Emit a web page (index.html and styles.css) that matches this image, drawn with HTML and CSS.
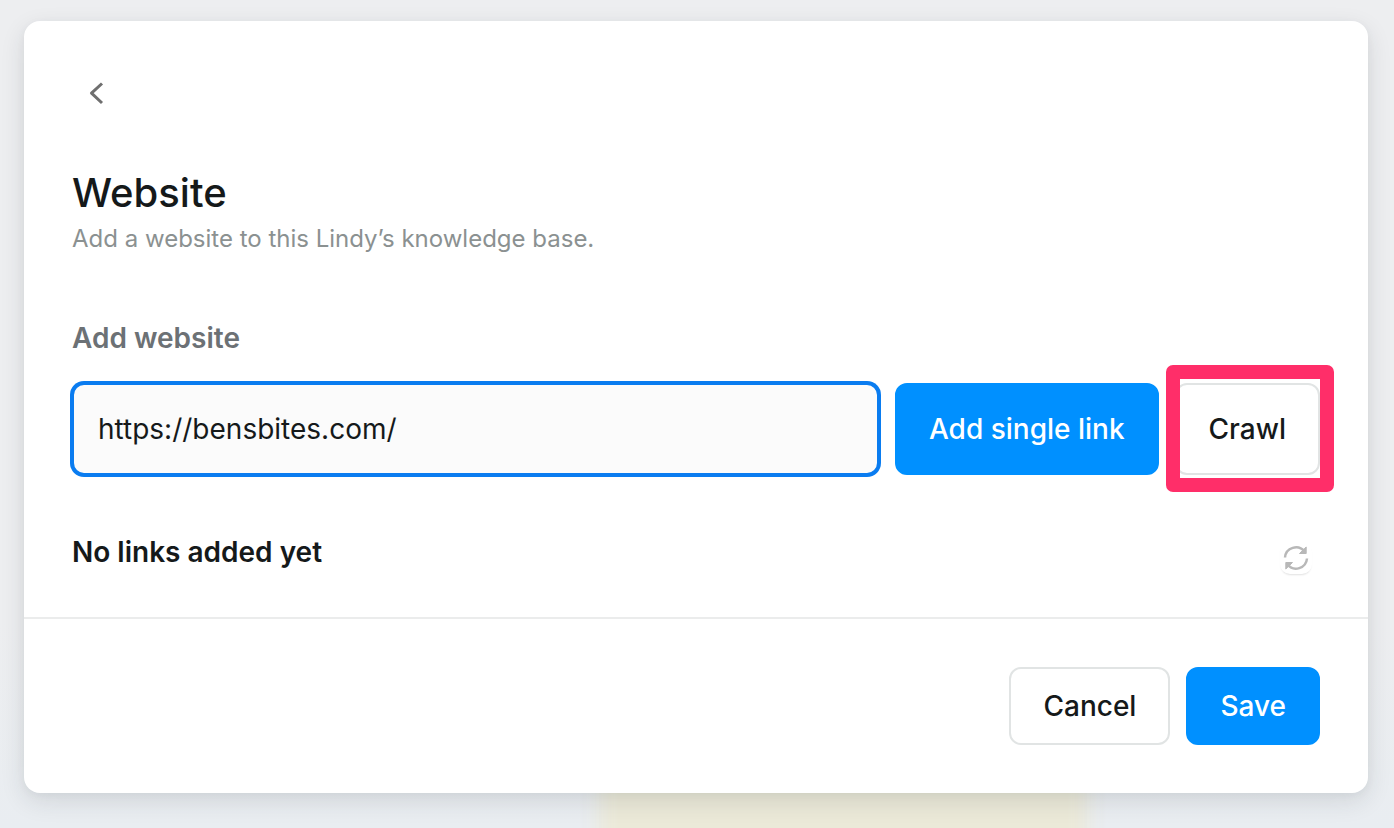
FILE: index.html
```
<!DOCTYPE html>
<html lang="en">
<head>
    <meta charset="UTF-8">
    <meta name="viewport" content="width=device-width, initial-scale=1.0">
    <title>Website</title>
    <link rel="stylesheet" href="styles.css">
</head>
<body>
    <div class="backdrop-note"></div>
    <main class="modal">
        <div class="modal-body">
            <button type="button" class="back-btn" aria-label="Back">
                <svg width="48" height="48" viewBox="0 0 48 48" fill="none" stroke="#6f6f6f" stroke-width="3" stroke-linejoin="round">
                    <path d="M30 14.500 19.500 24.200 30 34"/>
                </svg>
            </button>

            <h1>Website</h1>
            <p class="subtitle">Add a website to this Lindy’s knowledge base.</p>

            <form id="add-form">
                <label for="url">Add website</label>
                <div class="url-row">
                    <input type="text" id="url" value="https://bensbites.com/">
                    <button type="button" class="btn btn-primary">Add single link</button>
                    <div class="highlight">
                        <button type="button" class="btn">Crawl</button>
                    </div>
                </div>
            </form>

            <div class="links-row">
                <h2>No links added yet</h2>
                <button type="button" class="refresh-btn" aria-label="Refresh">
                    <svg width="28" height="28" viewBox="0 0 28 28" fill="none" stroke="#b8b8b8" stroke-width="2.500">
                        <path d="M3 13.500A11 11 0 0 1 22.500 7.500M25 14.500A11 11 0 0 1 5.500 20.500"/>
                        <path d="M24.200 3V9.500H17.500ZM3.800 25V18.500H10.500Z" fill="#b8b8b8" stroke-width="1" stroke-linejoin="round"/>
                    </svg>
                </button>
            </div>
        </div>

        <div class="modal-footer">
            <button type="button" class="btn">Cancel</button>
            <button type="submit" form="add-form" class="btn btn-primary">Save</button>
        </div>
    </main>
</body>
</html>
```
FILE: styles.css
```
* {
    box-sizing: border-box;
}
body {
    margin: 0;
    padding: 21px 26px 35px 24px;
    min-height: 100vh;
    position: relative;
    overflow: hidden;
    font-family: Inter, "Liberation Sans", sans-serif;
    color: #15191a;
    background: linear-gradient(#edeef0 75%, #e9edf1);
}
h1, h2, p {
    margin: 0;
}
/* blurred note on the page behind the modal */
.backdrop-note {
    position: absolute;
    left: 43%;
    right: 22%;
    bottom: -30px;
    height: 90px;
    background: #ebe9d8;
    filter: blur(10px);
}
.modal {
    position: relative;
    background: white;
    border-radius: 16px;
    box-shadow: 0 8px 24px rgba(30, 45, 50, 0.12), 0 2px 8px rgba(30, 45, 50, 0.04);
}
.modal-body {
    padding: 48px 48px 43px;
    border-bottom: 2px solid #ebecec;
}
button {
    font-family: inherit;
    cursor: pointer;
}
.back-btn {
    display: block;
    width: 48px;
    height: 48px;
    padding: 0;
    border: none;
    background: none;
}
h1 {
    margin-top: 52px;
    font-size: 40px;
    line-height: 48px;
    font-weight: 500;
}
.subtitle {
    margin-top: 6px;
    font-size: 24px;
    line-height: 32px;
    color: #8b9191;
}
label {
    display: block;
    margin-top: 63px;
    font-size: 28px;
    line-height: 40px;
    font-weight: 600;
    color: #6c7175;
}
.url-row {
    display: flex;
    gap: 16px;
    margin-top: 25px;
}
#url {
    flex: 1;
    min-width: 0;
    height: 92px;
    padding: 0 24px;
    border: 2px solid #0a7cf0;
    border-radius: 12px;
    box-shadow: 0 0 0 2px #0a7cf0;
    outline: none;
    background: #fbfbfb;
    font-family: inherit;
    font-size: 28px;
    color: #15191a;
}
.btn {
    height: 78px;
    padding: 0 32px;
    border: 2px solid #e1e4e4;
    border-radius: 12px;
    background: white;
    color: #15191a;
    font-size: 28px;
    font-weight: 500;
    white-space: nowrap;
}
.btn-primary {
    border-color: #0090ff;
    background: #0090ff;
    color: white;
}
.url-row .btn {
    height: 92px;
}
.highlight {
    position: relative;
}
.highlight::after {
    content: "";
    position: absolute;
    inset: -18px -14px -17px -9px;
    border: 14px solid #ff2e69;
    border-radius: 7px;
    pointer-events: none;
}
.links-row {
    display: flex;
    justify-content: space-between;
    padding-right: 8px;
    margin-top: 57px;
}
h2 {
    font-size: 28px;
    line-height: 40px;
    font-weight: 600;
}
.refresh-btn {
    display: flex;
    align-items: center;
    justify-content: center;
    width: 32px;
    height: 32px;
    margin-top: 10px;
    padding: 0;
    border: none;
    border-radius: 10px;
    background: white;
    box-shadow: 0 2px 2px -1px rgba(0, 0, 0, 0.12);
}
.modal-footer {
    display: flex;
    justify-content: flex-end;
    gap: 16px;
    padding: 48px;
}
```
